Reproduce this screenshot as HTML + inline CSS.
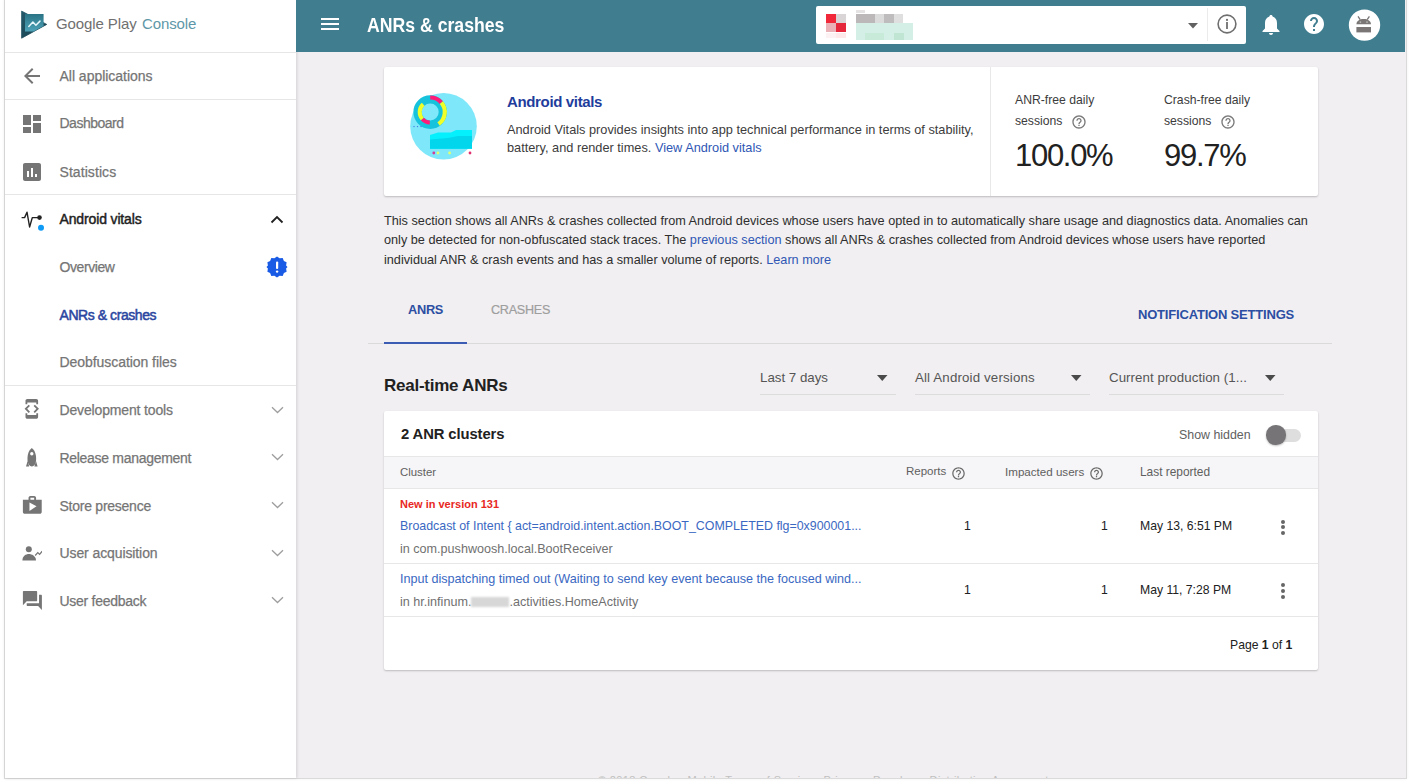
<!DOCTYPE html>
<html><head><meta charset="utf-8"><style>
html,body{margin:0;padding:0;width:1410px;height:783px;overflow:hidden;background:#ffffff;}
body{position:relative;font-family:"Liberation Sans",sans-serif;}
.t{position:absolute;white-space:nowrap;}
.r{position:absolute;}
</style></head><body>
<div class="r" style="left:5px;top:0px;width:1401px;height:778px;background:#f1eff1;box-shadow:0 0 0 1px #dadada, 0 0 3px 1px rgba(0,0,0,.06);"></div>
<div class="r" style="left:5px;top:0px;width:291px;height:778px;background:#ffffff;box-shadow:1px 0 3px rgba(0,0,0,.13);"></div>
<div class="r" style="left:296px;top:0px;width:1109px;height:51.5px;background:#3f7d8f;"></div>
<div class="r" style="left:5px;top:52px;width:291px;height:1px;background:#e6e6e6;"></div>
<div class="r" style="left:5px;top:99px;width:291px;height:1px;background:#e6e6e6;"></div>
<div class="r" style="left:5px;top:194px;width:291px;height:1px;background:#e6e6e6;"></div>
<div class="r" style="left:5px;top:385px;width:291px;height:1px;background:#e6e6e6;"></div>
<svg class="r" style="left:21px;top:10px" width="27" height="29" viewBox="0 0 27 29">
<defs><linearGradient id="lg1" x1="0" y1="0" x2="1" y2="1"><stop offset="0" stop-color="#24596a"/><stop offset="1" stop-color="#173f4c"/></linearGradient></defs>
<path d="M0.6 1.1 L25.7 14.4 L0.6 28.2 Z" fill="url(#lg1)" stroke="url(#lg1)" stroke-width="0.8" stroke-linejoin="round"/>
<defs><linearGradient id="lg2" x1="0" y1="0" x2="0" y2="1"><stop offset="0" stop-color="#2a7385"/><stop offset="1" stop-color="#4ea3b8"/></linearGradient></defs>
<path d="M4 3.9 H22.6 V16.1 L12.6 21.6 H4 Z" fill="url(#lg2)"/>
<path d="M7.8 16.5 L11.9 12.1 L14.9 15.2 L19 11.1" fill="none" stroke="#e6f6fa" stroke-width="1.5" stroke-linejoin="round" stroke-linecap="round"/>
</svg>
<div class="t" style="left:56px;top:16px;font-size:15px;line-height:15px;color:#707070;letter-spacing:-0.1px;">Google Play</div>
<div class="t" style="left:142px;top:16px;font-size:15px;line-height:15px;color:#5e97a8;letter-spacing:-0.1px;">Console</div>
<svg class="r" style="left:24px;top:68px" width="16" height="16" viewBox="0 0 16 16">
<path d="M16 7H3.8l5.6-5.6L8 0 0 8l8 8 1.4-1.4L3.8 9H16z" fill="#757575"/></svg>
<div class="t" style="left:59.5px;top:69px;font-size:14px;line-height:14px;color:#757575;letter-spacing:-0.02px;-webkit-text-stroke:0.25px #757575;">All applications</div>
<svg class="r" style="left:23px;top:115px" width="18" height="18" viewBox="0 0 18 18">
<path d="M0 10h8V0H0zm0 8h8v-6H0zm10 0h8V8h-8zm0-18v6h8V0z" fill="#757575"/></svg>
<div class="t" style="left:59.5px;top:116px;font-size:14px;line-height:14px;color:#757575;letter-spacing:-0.49px;-webkit-text-stroke:0.25px #757575;">Dashboard</div>
<svg class="r" style="left:23px;top:163px" width="18" height="18" viewBox="0 0 18 18">
<path d="M16 0H2C.9 0 0 .9 0 2v14c0 1.1.9 2 2 2h14c1.1 0 2-.9 2-2V2c0-1.1-.9-2-2-2zM6 14H4V8h2v6zm4 0H8V5h2v9zm4 0h-2v-3h2v3z" fill="#757575"/></svg>
<div class="t" style="left:59.5px;top:165px;font-size:14px;line-height:14px;color:#757575;letter-spacing:0.07px;-webkit-text-stroke:0.25px #757575;">Statistics</div>
<svg class="r" style="left:21px;top:211px" width="24" height="21" viewBox="0 0 24 21">
<path d="M0.6 6.6 H3.6 L6 1.2 L8.6 16 L11.3 6.6 H17" fill="none" stroke="#222" stroke-width="1.4" stroke-linejoin="round"/>
<circle cx="18.5" cy="6.6" r="2.3" fill="#222"/>
<circle cx="20" cy="16.8" r="3" fill="#0f9af5"/>
</svg>
<div class="t" style="left:59.5px;top:212px;font-size:14px;line-height:14px;color:#212121;letter-spacing:-0.14px;-webkit-text-stroke:0.45px #212121;">Android vitals</div>
<svg class="r" style="left:270px;top:214px" width="14" height="10" viewBox="0 0 14 10">
<path d="M1.5 8.5 L7 3 L12.5 8.5" fill="none" stroke="#212121" stroke-width="1.8"/></svg>
<div class="t" style="left:59.5px;top:260px;font-size:14px;line-height:14px;color:#757575;letter-spacing:-0.41px;-webkit-text-stroke:0.25px #757575;">Overview</div>
<svg class="r" style="left:266px;top:256px" width="22" height="22" viewBox="0 0 22 22">
<path d="M11 0.5 L13.6 2.3 L16.7 2 L17.9 4.9 L20.6 6.3 L20.1 9.4 L21.5 11 L20.1 12.6 L20.6 15.7 L17.9 17.1 L16.7 20 L13.6 19.7 L11 21.5 L8.4 19.7 L5.3 20 L4.1 17.1 L1.4 15.7 L1.9 12.6 L0.5 11 L1.9 9.4 L1.4 6.3 L4.1 4.9 L5.3 2 L8.4 2.3 Z" fill="#1a5be6"/>
<rect x="10" y="5.5" width="2.2" height="7.5" rx="1" fill="#fff"/><circle cx="11.1" cy="15.6" r="1.2" fill="#fff"/></svg>
<div class="t" style="left:59.5px;top:308px;font-size:14px;line-height:14px;color:#2a46a0;letter-spacing:-0.44px;-webkit-text-stroke:0.5px #2a46a0;">ANRs &amp; crashes</div>
<div class="t" style="left:59.5px;top:355px;font-size:14px;line-height:14px;color:#757575;letter-spacing:-0.06px;-webkit-text-stroke:0.25px #757575;">Deobfuscation files</div>
<svg class="r" style="left:21px;top:398px" width="21.6" height="21.6" viewBox="0 0 24 24">
<path d="M7 5h10v2h2V3c0-1.1-.9-1.99-2-1.99L7 1c-1.1 0-2 .9-2 2v4h2V5zm8.41 11.59L20 12l-4.59-4.59L14 8.83 17.17 12 14 15.17l1.41 1.42zM10 15.17L6.83 12 10 8.83 8.59 7.41 4 12l4.59 4.59L10 15.17zM17 19H7v-2H5v4c0 1.1.9 2 2 2h10c1.1 0 2-.9 2-2v-4h-2v2z" fill="#757575"/></svg>
<div class="t" style="left:59.5px;top:403px;font-size:14px;line-height:14px;color:#757575;letter-spacing:-0.15px;-webkit-text-stroke:0.25px #757575;">Development tools</div>
<svg class="r" style="left:24px;top:448px" width="15" height="20" viewBox="0 0 15 20">
<path d="M7.8 0 C11.5 3 12.5 8 12 13 C11.5 16 10 18.5 7.8 18.5 C5.6 18.5 4.1 16 3.6 13 C3.1 8 4.1 3 7.8 0 Z" fill="#757575"/>
<circle cx="7.8" cy="5.8" r="1.7" fill="#fff"/>
<path d="M3.6 13 L2 18.5 H5.2Z M12 13 L13.6 18.5 H10.4Z" fill="#757575"/></svg>
<div class="t" style="left:59.5px;top:451px;font-size:14px;line-height:14px;color:#757575;letter-spacing:-0.3px;-webkit-text-stroke:0.25px #757575;">Release management</div>
<svg class="r" style="left:20.5px;top:493.5px" width="22.6" height="22.6" viewBox="0 0 24 24">
<path d="M16 6V4c0-1.11-.89-2-2-2h-4c-1.11 0-2 .89-2 2v2H2v13c0 1.11.89 2 2 2h16c1.11 0 2-.89 2-2V6h-6zm-6-2h4v2h-4V4zM9 18V9l7.5 4L9 18z" fill="#757575"/></svg>
<div class="t" style="left:59.5px;top:499px;font-size:14px;line-height:14px;color:#757575;letter-spacing:-0.25px;-webkit-text-stroke:0.25px #757575;">Store presence</div>
<svg class="r" style="left:22px;top:545px" width="20" height="16" viewBox="0 0 20 16">
<circle cx="6.8" cy="4.2" r="3" fill="#757575"/>
<path d="M0.4 15.4 C0.4 11 4 9 6.8 9 C9.6 9 14 11 14 15.4 Z" fill="#757575"/>
<path d="M13.2 10.5 L15.8 7.6 L17.6 9.4 L20.2 6.2" fill="none" stroke="#757575" stroke-width="1.2"/></svg>
<div class="t" style="left:59.5px;top:546px;font-size:14px;line-height:14px;color:#757575;letter-spacing:-0.1px;-webkit-text-stroke:0.25px #757575;">User acquisition</div>
<svg class="r" style="left:20.5px;top:589px" width="22.8" height="22.8" viewBox="0 0 24 24">
<path d="M21 6h-2v9H6v2c0 .55.45 1 1 1h11l4 4V7c0-.55-.45-1-1-1zm-4 6V3c0-.55-.45-1-1-1H3c-.55 0-1 .45-1 1v14l4-4h10c.55 0 1-.45 1-1z" fill="#757575"/></svg>
<div class="t" style="left:59.5px;top:594px;font-size:14px;line-height:14px;color:#757575;letter-spacing:-0.27px;-webkit-text-stroke:0.25px #757575;">User feedback</div>
<svg class="r" style="left:271px;top:406px" width="13" height="8" viewBox="0 0 13 8">
<path d="M1 1.2 L6.5 6.5 L12 1.2" fill="none" stroke="#9e9e9e" stroke-width="1.3"/></svg>
<svg class="r" style="left:271px;top:453px" width="13" height="8" viewBox="0 0 13 8">
<path d="M1 1.2 L6.5 6.5 L12 1.2" fill="none" stroke="#9e9e9e" stroke-width="1.3"/></svg>
<svg class="r" style="left:271px;top:501px" width="13" height="8" viewBox="0 0 13 8">
<path d="M1 1.2 L6.5 6.5 L12 1.2" fill="none" stroke="#9e9e9e" stroke-width="1.3"/></svg>
<svg class="r" style="left:271px;top:549px" width="13" height="8" viewBox="0 0 13 8">
<path d="M1 1.2 L6.5 6.5 L12 1.2" fill="none" stroke="#9e9e9e" stroke-width="1.3"/></svg>
<svg class="r" style="left:271px;top:596px" width="13" height="8" viewBox="0 0 13 8">
<path d="M1 1.2 L6.5 6.5 L12 1.2" fill="none" stroke="#9e9e9e" stroke-width="1.3"/></svg>
<div class="r" style="left:321px;top:18px;width:18px;height:2px;background:#ffffff;"></div>
<div class="r" style="left:321px;top:23px;width:18px;height:2px;background:#ffffff;"></div>
<div class="r" style="left:321px;top:28px;width:18px;height:2px;background:#ffffff;"></div>
<div class="t" style="left:367px;top:15px;font-size:20px;line-height:20px;color:#ffffff;font-weight:bold;transform:scaleX(0.883);transform-origin:0 0;">ANRs &amp; crashes</div>
<div class="r" style="left:816px;top:5.5px;width:430px;height:38px;background:#ffffff;border-radius:2px;"></div>
<div class="r" style="left:1207px;top:8px;width:1px;height:33px;background:#ebebeb;"></div>
<div class="r" style="left:826px;top:14px;width:10px;height:9px;background:#f0283a;"></div>
<div class="r" style="left:836px;top:14px;width:10px;height:9px;background:#d9d4d6;"></div>
<div class="r" style="left:826px;top:23px;width:10px;height:9px;background:#eab1b7;"></div>
<div class="r" style="left:836px;top:23px;width:10px;height:9px;background:#e5283b;"></div>
<div class="r" style="left:836px;top:33px;width:10px;height:5px;background:#fde8ea;"></div>
<div class="r" style="left:826px;top:33px;width:10px;height:5px;background:#fdf2f3;"></div>
<div class="r" style="left:856px;top:10px;width:9px;height:3px;background:#e4e2e3;"></div>
<div class="r" style="left:856px;top:14px;width:19px;height:9px;background:#bcb8b9;"></div>
<div class="r" style="left:875px;top:14px;width:9px;height:9px;background:#dcdbdb;"></div>
<div class="r" style="left:884px;top:14px;width:10px;height:9px;background:#bfbcbd;"></div>
<div class="r" style="left:894px;top:14px;width:9px;height:9px;background:#e0dfdf;"></div>
<div class="r" style="left:856px;top:23px;width:57px;height:17px;background:#d4efe5;"></div>
<div class="r" style="left:865px;top:33px;width:19px;height:7px;background:#c7ead9;"></div>
<div class="r" style="left:894px;top:33px;width:10px;height:7px;background:#c0e5d3;"></div>
<svg class="r" style="left:1188px;top:23px" width="10" height="6" viewBox="0 0 10 6"><path d="M0 0h10L5 5.4z" fill="#616161"/></svg>
<svg class="r" style="left:1216px;top:13.4px" width="22" height="22" viewBox="0 0 22 22">
<circle cx="11" cy="11" r="8.9" fill="none" stroke="#6f6f6f" stroke-width="1.6"/>
<rect x="10.1" y="9" width="1.8" height="7" fill="#6f6f6f"/><circle cx="11" cy="6.9" r="1.1" fill="#6f6f6f"/></svg>
<svg class="r" style="left:1262px;top:14px" width="18" height="22" viewBox="0 0 18 22">
<path d="M9 1 C10 1 10.6 1.7 10.6 2.6 C13.5 3.4 15 6 15 9 V14.5 L17.5 17 V18 H0.5 V17 L3 14.5 V9 C3 6 4.5 3.4 7.4 2.6 C7.4 1.7 8 1 9 1Z" fill="#fff"/>
<path d="M7 19 H11 C11 20.2 10.1 21 9 21 C7.9 21 7 20.2 7 19Z" fill="#fff"/></svg>
<svg class="r" style="left:1301.8px;top:12.4px" width="24" height="24" viewBox="0 0 24 24">
<path d="M12 2C6.48 2 2 6.48 2 12s4.48 10 10 10 10-4.48 10-10S17.52 2 12 2zm1 17h-2v-2h2v2zm2.07-7.75l-.9.92C13.45 12.9 13 13.5 13 15h-2v-.5c0-1.1.45-2.1 1.17-2.83l1.24-1.26c.37-.36.59-.86.59-1.41 0-1.1-.9-2-2-2s-2 .9-2 2H8c0-2.21 1.79-4 4-4s4 1.79 4 4c0 .88-.36 1.68-.93 2.25z" fill="#fff"/></svg>
<svg class="r" style="left:1348px;top:8.5px" width="33" height="33" viewBox="0 0 33 33">
<circle cx="16.5" cy="16.1" r="15.7" fill="#fff"/>
<path d="M8.4 15.3 C8.4 11.8 11.6 9.9 15.7 9.9 C19.8 9.9 23 11.8 23 15.3 Z" fill="#7a7676"/>
<path d="M10 7.3 L12.2 10.6 M21.4 7.3 L19.2 10.6" stroke="#7a7676" stroke-width="1.3"/>
<circle cx="12.4" cy="13.1" r="0.9" fill="#b9b6b6"/><circle cx="19" cy="13.1" r="0.9" fill="#b9b6b6"/>
<rect x="8.4" y="18" width="14.6" height="5.4" fill="#7a7676"/></svg>
<div class="r" style="left:384px;top:67px;width:934px;height:129px;background:#ffffff;box-shadow:0 1px 2px rgba(0,0,0,.22);border-radius:2px;"></div>
<div class="r" style="left:990px;top:67px;width:1px;height:129px;background:#e8e8e8;"></div>
<svg class="r" style="left:408px;top:90px" width="72" height="72" viewBox="0 0 72 72">
<circle cx="35.5" cy="36.3" r="33.3" fill="#7ee7f9"/>
<circle cx="22.2" cy="22.1" r="12.65" fill="none" stroke="#17c3dc" stroke-width="8.3"/>
<path d="M22.20 7.50 A14.6 14.6 0 0 1 33.38 12.72" fill="none" stroke="#ff1c78" stroke-width="4.2"/>
<path d="M33.38 12.72 A14.6 14.6 0 0 1 30.57 34.06" fill="none" stroke="#eeff2a" stroke-width="4.2"/>
<path d="M21.83 32.59 A10.5 10.5 0 0 1 14.28 28.99" fill="none" stroke="#ff1c78" stroke-width="4"/>
<path d="M14.28 28.99 A10.5 10.5 0 0 1 15.17 14.30" fill="none" stroke="#eeff2a" stroke-width="4"/>
<path d="M22 45 L30 42.4 L43 42.4 L48 40 L64 40 V58.7 H22Z" fill="#04f0fd"/>
<path d="M22 49.5 L40 48 L50 46 L64 46 V58.7 H22Z" fill="#02d6ec"/>
<circle cx="25.8" cy="63" r="1.4" fill="#d23d9a"/><circle cx="30" cy="63" r="1.4" fill="#e4ff6e"/>
<circle cx="41.6" cy="63" r="1.4" fill="#e4ff6e"/><circle cx="62" cy="63" r="1.4" fill="#e0306f"/>
<circle cx="6" cy="36.6" r=".7" fill="#3a6de0"/><circle cx="9.5" cy="36.6" r=".7" fill="#3a6de0"/><circle cx="13" cy="36.6" r=".7" fill="#3a6de0"/>
</svg>
<div class="t" style="left:507px;top:94px;font-size:15px;line-height:15px;color:#1f3d9c;font-weight:bold;letter-spacing:-0.35px;">Android vitals</div>
<div class="t" style="left:507px;top:124px;font-size:12.75px;line-height:12.75px;color:#3c3c3c;">Android Vitals provides insights into app technical performance in terms of stability,</div>
<div class="t" style="left:507px;top:142px;font-size:12.75px;line-height:12.75px;color:#3c3c3c;">battery, and render times. <span style="color:#2f57b5">View Android vitals</span></div>
<div class="t" style="left:1015px;top:94px;font-size:12.2px;line-height:12.2px;color:#3c3c3c;">ANR-free daily</div>
<div class="t" style="left:1015px;top:115px;font-size:12.2px;line-height:12.2px;color:#3c3c3c;">sessions</div>
<div class="t" style="left:1164px;top:94px;font-size:12.2px;line-height:12.2px;color:#3c3c3c;">Crash-free daily</div>
<div class="t" style="left:1164px;top:115px;font-size:12.2px;line-height:12.2px;color:#3c3c3c;">sessions</div>
<svg class="r" style="left:1071px;top:114px" width="16" height="16" viewBox="0 0 24 24">
<path d="M11 18h2v-2h-2v2zm1-16C6.48 2 2 6.48 2 12s4.48 10 10 10 10-4.48 10-10S17.52 2 12 2zm0 18c-4.41 0-8-3.59-8-8s3.59-8 8-8 8 3.59 8 8-3.59 8-8 8zm0-14c-2.21 0-4 1.79-4 4h2c0-1.1.9-2 2-2s2 .9 2 2c0 2-3 1.75-3 5h2c0-2.25 3-2.5 3-5 0-2.21-1.79-4-4-4z" fill="#7a7a7a"/></svg>
<svg class="r" style="left:1220px;top:114px" width="16" height="16" viewBox="0 0 24 24">
<path d="M11 18h2v-2h-2v2zm1-16C6.48 2 2 6.48 2 12s4.48 10 10 10 10-4.48 10-10S17.52 2 12 2zm0 18c-4.41 0-8-3.59-8-8s3.59-8 8-8 8 3.59 8 8-3.59 8-8 8zm0-14c-2.21 0-4 1.79-4 4h2c0-1.1.9-2 2-2s2 .9 2 2c0 2-3 1.75-3 5h2c0-2.25 3-2.5 3-5 0-2.21-1.79-4-4-4z" fill="#7a7a7a"/></svg>
<div class="t" style="left:1015px;top:140px;font-size:31px;line-height:31px;color:#212121;letter-spacing:-1.3px;">100.0%</div>
<div class="t" style="left:1164px;top:140px;font-size:31px;line-height:31px;color:#212121;letter-spacing:-1.3px;">99.7%</div>
<div class="t" style="left:384px;top:215px;font-size:12.7px;line-height:12.7px;color:#2e2e2e;">This section shows all ANRs &amp; crashes collected from Android devices whose users have opted in to automatically share usage and diagnostics data. Anomalies can</div>
<div class="t" style="left:384px;top:234px;font-size:12.7px;line-height:12.7px;color:#2e2e2e;">only be detected for non-obfuscated stack traces. The <span style="color:#2f57b5">previous section</span> shows all ANRs &amp; crashes collected from Android devices whose users have reported</div>
<div class="t" style="left:384px;top:254px;font-size:12.7px;line-height:12.7px;color:#2e2e2e;">individual ANR &amp; crash events and has a smaller volume of reports. <span style="color:#2f57b5">Learn more</span></div>
<div class="t" style="left:408px;top:304px;font-size:12.8px;line-height:12.8px;color:#2c4ea3;font-weight:bold;letter-spacing:-0.3px;">ANRS</div>
<div class="t" style="left:491px;top:304px;font-size:12.6px;line-height:12.6px;color:#9e9e9e;letter-spacing:-0.25px;-webkit-text-stroke:0.2px #9e9e9e;">CRASHES</div>
<div class="t" style="left:1138px;top:308px;font-size:13px;line-height:13px;color:#2c4ea3;font-weight:bold;letter-spacing:-0.19px;">NOTIFICATION SETTINGS</div>
<div class="r" style="left:368px;top:343px;width:964px;height:1px;background:#dadada;"></div>
<div class="r" style="left:384px;top:342px;width:83px;height:2px;background:#3b5cb2;"></div>
<div class="t" style="left:384px;top:377px;font-size:17px;line-height:17px;color:#212121;font-weight:bold;letter-spacing:-0.25px;">Real-time ANRs</div>
<div class="t" style="left:760px;top:371px;font-size:13.3px;line-height:13.3px;color:#555555;">Last 7 days</div>
<div class="r" style="left:760px;top:394px;width:136px;height:1px;background:#dcdcdc;"></div>
<div class="t" style="left:915px;top:371px;font-size:13.3px;line-height:13.3px;color:#555555;letter-spacing:0.15px;">All Android versions</div>
<div class="r" style="left:915px;top:394px;width:175px;height:1px;background:#dcdcdc;"></div>
<div class="t" style="left:1109px;top:371px;font-size:13.3px;line-height:13.3px;color:#555555;letter-spacing:0.05px;">Current production (1...</div>
<div class="r" style="left:1109px;top:394px;width:175px;height:1px;background:#dcdcdc;"></div>
<svg class="r" style="left:877px;top:375px" width="11" height="6" viewBox="0 0 11 6"><path d="M0 0h10.5L5.25 6z" fill="#4a4a4a"/></svg>
<svg class="r" style="left:1071px;top:375px" width="11" height="6" viewBox="0 0 11 6"><path d="M0 0h10.5L5.25 6z" fill="#4a4a4a"/></svg>
<svg class="r" style="left:1265px;top:375px" width="11" height="6" viewBox="0 0 11 6"><path d="M0 0h10.5L5.25 6z" fill="#4a4a4a"/></svg>
<div class="r" style="left:384px;top:411px;width:934px;height:259px;background:#ffffff;box-shadow:0 1px 2px rgba(0,0,0,.22);border-radius:2px;"></div>
<div class="t" style="left:401px;top:427px;font-size:14.8px;line-height:14.8px;color:#212121;font-weight:bold;letter-spacing:-0.1px;">2 ANR clusters</div>
<div class="t" style="left:1179px;top:429px;font-size:12.4px;line-height:12.4px;color:#616161;">Show hidden</div>
<div class="r" style="left:1268px;top:428.5px;width:33px;height:13px;background:#dedede;border-radius:6.5px;"></div>
<div class="r" style="left:1266px;top:425px;width:19.5px;height:19.5px;border-radius:50%;background:#767476;box-shadow:0 1px 2px rgba(0,0,0,.25)"></div>
<div class="r" style="left:384px;top:456px;width:934px;height:32px;background:#f6f5f7;"></div>
<div class="r" style="left:384px;top:456px;width:934px;height:1px;background:#e7e7e7;"></div>
<div class="r" style="left:384px;top:488px;width:934px;height:1px;background:#e7e7e7;"></div>
<div class="t" style="left:400px;top:467px;font-size:11.4px;line-height:11.4px;color:#5f5f5f;">Cluster</div>
<div class="t" style="left:906px;top:466px;font-size:11.5px;line-height:11.5px;color:#5f5f5f;">Reports</div>
<svg class="r" style="left:951px;top:466px" width="15" height="15" viewBox="0 0 24 24">
<path d="M11 18h2v-2h-2v2zm1-16C6.48 2 2 6.48 2 12s4.48 10 10 10 10-4.48 10-10S17.52 2 12 2zm0 18c-4.41 0-8-3.59-8-8s3.59-8 8-8 8 3.59 8 8-3.59 8-8 8zm0-14c-2.21 0-4 1.79-4 4h2c0-1.1.9-2 2-2s2 .9 2 2c0 2-3 1.75-3 5h2c0-2.25 3-2.5 3-5 0-2.21-1.79-4-4-4z" fill="#6a6a6a"/></svg>
<div class="t" style="left:1005px;top:466px;font-size:11.6px;line-height:11.6px;color:#5f5f5f;">Impacted users</div>
<svg class="r" style="left:1089px;top:466px" width="15" height="15" viewBox="0 0 24 24">
<path d="M11 18h2v-2h-2v2zm1-16C6.48 2 2 6.48 2 12s4.48 10 10 10 10-4.48 10-10S17.52 2 12 2zm0 18c-4.41 0-8-3.59-8-8s3.59-8 8-8 8 3.59 8 8-3.59 8-8 8zm0-14c-2.21 0-4 1.79-4 4h2c0-1.1.9-2 2-2s2 .9 2 2c0 2-3 1.75-3 5h2c0-2.25 3-2.5 3-5 0-2.21-1.79-4-4-4z" fill="#6a6a6a"/></svg>
<div class="t" style="left:1140px;top:467px;font-size:11.9px;line-height:11.9px;color:#5f5f5f;">Last reported</div>
<div class="t" style="left:400px;top:499px;font-size:11px;line-height:11px;color:#e8281e;font-weight:bold;">New in version 131</div>
<div class="t" style="left:400px;top:520px;font-size:12.4px;line-height:12.4px;color:#3a68c2;">Broadcast of Intent { act=android.intent.action.BOOT_COMPLETED flg=0x900001...</div>
<div class="t" style="left:400px;top:543px;font-size:12.6px;line-height:12.6px;color:#707070;">in com.pushwoosh.local.BootReceiver</div>
<div class="t" style="left:964px;top:520px;font-size:12.2px;line-height:12.2px;color:#212121;">1</div>
<div class="t" style="left:1101px;top:520px;font-size:12.2px;line-height:12.2px;color:#212121;">1</div>
<div class="t" style="left:1140px;top:520px;font-size:12.2px;line-height:12.2px;color:#212121;">May 13, 6:51 PM</div>
<div class="r" style="left:384px;top:563px;width:934px;height:1px;background:#e7e7e7;"></div>
<div class="t" style="left:400px;top:572.5px;font-size:12.6px;line-height:12.6px;color:#3a68c2;">Input dispatching timed out (Waiting to send key event because the focused wind...</div>
<div class="t" style="left:400px;top:595.5px;font-size:12.6px;line-height:12.6px;color:#707070;">in hr.infinum.<span style="display:inline-block;width:38px;height:10px;background:#d7d7d7;vertical-align:-1px;filter:blur(1px)"></span>.activities.HomeActivity</div>
<div class="t" style="left:964px;top:584px;font-size:12.2px;line-height:12.2px;color:#212121;">1</div>
<div class="t" style="left:1101px;top:584px;font-size:12.2px;line-height:12.2px;color:#212121;">1</div>
<div class="t" style="left:1140px;top:584px;font-size:12.2px;line-height:12.2px;color:#212121;">May 11, 7:28 PM</div>
<div class="r" style="left:384px;top:616px;width:934px;height:1px;background:#e7e7e7;"></div>
<div class="r" style="left:1280.5px;top:519.5px;width:4px;height:4px;border-radius:50%;background:#666"></div>
<div class="r" style="left:1280.5px;top:525.4px;width:4px;height:4px;border-radius:50%;background:#666"></div>
<div class="r" style="left:1280.5px;top:531.3px;width:4px;height:4px;border-radius:50%;background:#666"></div>
<div class="r" style="left:1280.5px;top:582.7px;width:4px;height:4px;border-radius:50%;background:#666"></div>
<div class="r" style="left:1280.5px;top:588.6px;width:4px;height:4px;border-radius:50%;background:#666"></div>
<div class="r" style="left:1280.5px;top:594.5px;width:4px;height:4px;border-radius:50%;background:#666"></div>
<div class="t" style="left:1230px;top:639px;font-size:12.2px;line-height:12.2px;color:#212121;">Page <b>1</b> of <b>1</b></div>
<div class="r" style="left:598px;top:770px;width:456px;height:8px;overflow:hidden"><div class="t" style="left:0px;top:4.5px;font-size:11px;line-height:11px;color:#c0c0c0;letter-spacing:0.35px">© 2018 Google · Mobile Terms of Service · Privacy · Developer Distribution Agreement</div></div>
</body></html>
